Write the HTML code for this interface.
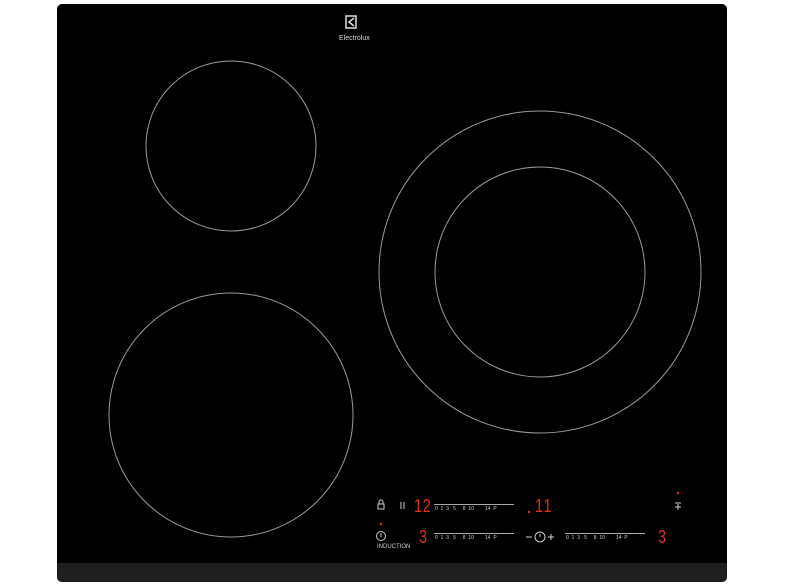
<!DOCTYPE html>
<html><head><style>
body{margin:0;width:786px;height:587px;background:#fff;overflow:hidden;position:relative;font-family:"Liberation Sans",sans-serif}
#hob{position:absolute;left:57px;top:4px;width:670px;height:578px;background:#000;border-radius:5px;overflow:hidden}
#strip{position:absolute;left:0;top:559px;width:670px;height:19px;background:#1e1e1e}
.t{position:absolute;color:#ccc;font-size:5px;white-space:nowrap}
.r{position:absolute;color:#e0301c;font-size:18px;font-family:"Liberation Sans",sans-serif;line-height:1;transform:scaleX(0.8);transform-origin:left}
.sl{position:absolute;height:1px;background:#aaa}
</style></head><body>
<div id="hob">
<svg width="670" height="578" style="position:absolute;left:0;top:0">
<g fill="none" stroke="#9a9a9a" stroke-width="1">
<circle cx="174" cy="142" r="85"/>
<circle cx="174" cy="411" r="122"/>
<circle cx="483" cy="268" r="161"/>
<circle cx="483" cy="268" r="105"/>
</g>
<rect x="289" y="12" width="10" height="12" fill="none" stroke="#ddd" stroke-width="1.5"/>
<path d="M297 14 L292 18 L297 22" fill="none" stroke="#ddd" stroke-width="1.5"/>
<g fill="none" stroke="#ccc" stroke-width="1">
<rect x="321" y="500" width="6" height="5"/><path d="M322 500 v-2 a2 2 0 0 1 4 0 v2"/>
<circle cx="324" cy="532" r="4.5"/><path d="M324 529 v4"/>
<circle cx="483" cy="533" r="5"/><path d="M483 530 v3"/>
<path d="M469 533 h6 M491 533 h6 M494 530 v6"/>
<path d="M344 498 v7 M347 498 v7"/>
<path d="M618 499 h6 M618 503 h6 M621 500 v6"/>
</g>
<circle cx="324" cy="520" r="1.2" fill="#e0301c"/>
<circle cx="621" cy="489" r="1.2" fill="#e0301c"/>
<circle cx="472" cy="508" r="1.2" fill="#e0301c"/>
</svg>
<div class="t" style="left:282px;top:31px;color:#ddd;font-size:7px">Electrolux</div>
<div class="r" style="left:357px;top:493px;letter-spacing:1px">12</div>
<div class="r" style="left:478px;top:493px;letter-spacing:2px">11</div>
<div class="r" style="left:362px;top:524px">3</div>
<div class="r" style="left:601px;top:524px">3</div>
<div class="sl" style="left:377px;top:500px;width:80px"></div>
<div class="t" style="left:378px;top:502px">0 &nbsp;1 &nbsp;3 &nbsp; 5 &nbsp; &nbsp; 8 &nbsp;10 &nbsp; &nbsp; &nbsp; &nbsp;14 &nbsp;P</div>
<div class="sl" style="left:377px;top:529px;width:80px"></div>
<div class="t" style="left:378px;top:531px">0 &nbsp;1 &nbsp;3 &nbsp; 5 &nbsp; &nbsp; 8 &nbsp;10 &nbsp; &nbsp; &nbsp; &nbsp;14 &nbsp;P</div>
<div class="sl" style="left:508px;top:529px;width:80px"></div>
<div class="t" style="left:509px;top:531px">0 &nbsp;1 &nbsp;3 &nbsp; 5 &nbsp; &nbsp; 8 &nbsp;10 &nbsp; &nbsp; &nbsp; &nbsp;14 &nbsp;P</div>
<div class="t" style="left:320px;top:540px;font-size:6px">INDUCTION</div>
<div id="strip"></div>
</div>
</body></html>
